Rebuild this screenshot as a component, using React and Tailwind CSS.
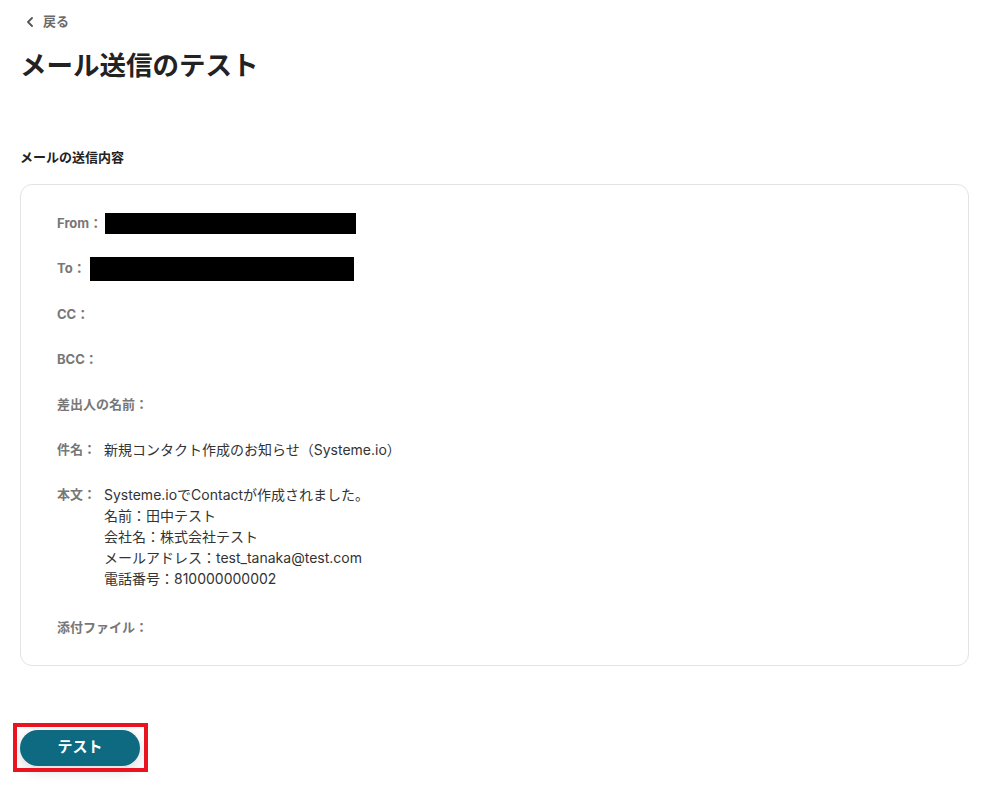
import React from "react";

const font = { fontFamily: 'Inter, "Noto Sans CJK JP", sans-serif' };

function Row({ label, children, className = "" }) {
  return (
    <div className={"flex items-start leading-[21px] " + className}>
      <span className="text-[13px] font-bold text-[#777777] whitespace-nowrap">{label}</span>
      {children}
    </div>
  );
}

export default function App() {
  return (
    <div className="min-h-[804px] w-[986px] bg-white" style={font}>
      <div className="pl-[20px] pr-[17px] pt-[12px]">
        <button className="flex items-center gap-[8px] pl-[6px] text-[13px] font-bold text-[#6b6b6b]">
          <svg width="9" height="10" viewBox="0 0 9 10" fill="none">
            <path d="M6 1 L2 5 L6 9" stroke="#555" strokeWidth="1.8" strokeLinecap="round" strokeLinejoin="round" />
          </svg>
          <span>戻る</span>
        </button>
        <h1 className="mt-[14px] text-[26.5px] font-bold leading-[38px] text-[#222222]">メール送信のテスト</h1>
        <h2 className="mt-[63px] text-[13px] font-bold leading-[20px] text-[#222222]">メールの送信内容</h2>
        <div className="mt-[17px] rounded-[12px] border border-[#e3e3e3] px-[36px] pb-[27px] pt-[28px]">
          <div className="flex flex-col gap-[24px]">
            <Row label="From：" className="items-center">
              <div className="ml-[3px] h-[21px] w-[251px] bg-black" />
            </Row>
            <Row label="To：" className="items-center">
              <div className="-my-[1px] ml-[4px] h-[24px] w-[264px] bg-black" />
            </Row>
            <Row label="CC：" />
            <Row label="BCC：" />
            <Row label="差出人の名前：" />
            <Row label="件名：">
              <span className="ml-[8px] text-[14px] text-[#333333]">新規コンタクト作成のお知らせ（Systeme.io）</span>
            </Row>
            <Row label="本文：">
              <div className="ml-[8px] text-[14px] text-[#333333]">
                <div>Systeme.ioでContactが作成されました。</div>
                <div>名前：田中テスト</div>
                <div>会社名：株式会社テスト</div>
                <div>メールアドレス：test_tanaka@test.com</div>
                <div>電話番号：810000000002</div>
              </div>
            </Row>
            <Row label="添付ファイル：" className="mt-[4px]" />
          </div>
        </div>
        <div className="mt-[64px]">
          <div className="relative inline-block">
            <button className="flex h-[36px] w-[120px] items-center justify-center rounded-full bg-[#0e6a80] text-[15px] font-bold text-white shadow-[0_4px_14px_rgba(0,0,0,0.15)]">
              テスト
            </button>
            <div className="pointer-events-none absolute -left-[7px] -top-[7px] h-[49px] w-[135px] border-[4px] border-[#e8141f]" />
          </div>
        </div>
      </div>
    </div>
  );
}
